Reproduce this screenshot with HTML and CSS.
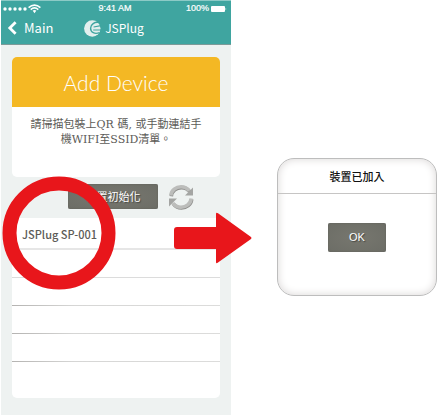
FILE: index.html
```html
<!DOCTYPE html>
<html lang="zh-Hant">
<head>
<meta charset="utf-8">
<meta name="viewport" content="width=device-width, initial-scale=1">
<title>Add Device</title>
<link rel="stylesheet" href="styles.css">
</head>
<body>
<main class="flow">
  <section class="phone">
    <header class="topbar">
      <div class="status">
        <svg class="signal" viewBox="0 0 38 10" width="38" height="10" aria-hidden="true">
          <g fill="#fff"><circle cx="2" cy="5" r="1.7"/><circle cx="7" cy="5" r="1.7"/><circle cx="12" cy="5" r="1.7"/><circle cx="17" cy="5" r="1.7"/><circle cx="22" cy="5" r="1.7"/><path d="M29.6 6.6 L31.5 9.2 L33.4 6.6 Q31.5 5.2 29.6 6.6Z"/></g>
          <g fill="none" stroke="#fff" stroke-width="1.6"><path d="M25.6 3.6 Q31.5 -1.4 37.4 3.6"/><path d="M27.7 5.6 Q31.5 2.2 35.3 5.6"/></g>
        </svg>
        <span class="clock">9:41 AM</span>
        <span class="power">100%
          <svg viewBox="0 0 16 6" width="16" height="6" aria-hidden="true"><rect width="14" height="6" rx="1" fill="#fff"/><path d="M14.6 1.8 Q16 3 14.6 4.2Z" fill="#fff"/></svg>
        </span>
      </div>
      <nav class="nav">
        <a class="back" href="#main">
          <svg viewBox="0 0 10 14" width="10" height="14" aria-hidden="true"><path d="M8.6 1.2 L2.8 7 L8.6 12.8" fill="none" stroke="#fff" stroke-width="2.8"/></svg>
          Main
        </a>
        <span class="brand">
          <svg viewBox="0 0 17 17" width="17" height="17" aria-hidden="true">
            <circle cx="8.3" cy="8.5" r="8.2" fill="#e2efee"/>
            <path d="M15.4 2.6 C10.5 1.4 6.6 4.6 6.6 8.2 C6.6 12.4 10.8 14.6 15.6 12.6" fill="none" stroke="#3fa5a0" stroke-width="1.4"/>
            <path d="M9.6 7 L17 5.6 M9.2 10 H17" fill="none" stroke="#3fa5a0" stroke-width="1.2"/>
          </svg>
          <span class="wordmark">JSPlug</span>
        </span>
      </nav>
    </header>

    <div class="content">
      <article class="card">
        <h1 class="card-title">Add Device</h1>
        <p class="card-text">請掃描包裝上QR 碼, 或手動連結手<br>機WIFI至SSID清單。</p>
      </article>

      <div class="actions">
        <button class="btn init" type="button">裝置初始化</button>
        <button class="refresh" type="button" aria-label="Refresh">
          <svg viewBox="0 0 26 26" width="26" height="26" aria-hidden="true">
            <g transform="translate(.5 .8)" fill="none" stroke="#8f8f8d" stroke-width="3.6"><path d="M2.8 11.5 C3.4 6 8 2.8 13 2.8 C16.4 2.8 19.4 4.4 21.2 7"/><path d="M23.2 14.5 C22.6 20 18 23.2 13 23.2 C9.6 23.2 6.6 21.6 4.8 19"/></g>
            <g fill="none" stroke="#bcbdbb" stroke-width="3.6"><path d="M2.8 11.5 C3.4 6 8 2.8 13 2.8 C16.4 2.8 19.4 4.4 21.2 7"/><path d="M23.2 14.5 C22.6 20 18 23.2 13 23.2 C9.6 23.2 6.6 21.6 4.8 19"/></g>
            <path d="M25 3.5 V11.6 H17Z M1 22.5 V14.4 H9Z" fill="#a4a5a3"/>
          </svg>
        </button>
      </div>

      <ul class="list">
        <li class="row first"><a href="#device">JSPlug SP-001</a>
          <svg class="ring" viewBox="0 0 114 114" width="114" height="114" aria-hidden="true"><circle cx="57" cy="57" r="49.5" fill="none" stroke="#e8161b" stroke-width="14"/></svg>
          <svg class="arrow" viewBox="0 0 78 52" width="78" height="52" aria-hidden="true"><path d="M3 15 H42 V2 Q42 0 44 1.2 L77 25 Q78 26 77 27 L44 50.6 Q42 52 42 50 V37 H3 Q0 37 0 34 V18 Q0 15 3 15Z" fill="#e8161b"/></svg>
        </li>
        <li class="row pale"></li>
        <li class="row"></li>
        <li class="row"></li>
        <li class="row"></li>
        <li class="row last"></li>
      </ul>
    </div>
  </section>

  <section class="result">
    <div class="dialog" role="dialog" aria-labelledby="dialog-title">
      <h2 class="dialog-title" id="dialog-title">裝置已加入</h2>
      <div class="dialog-body"><button class="btn ok" type="button">OK</button></div>
    </div>
  </section>
</main>
</body>
</html>
```
FILE: styles.css
```css
* {
  box-sizing: border-box;
}

body {
  margin: 0;
  background: #fff;
  font-family: "Noto Sans CJK TC", "Noto Sans", sans-serif;
  color: #5c5b57;
}

h1, h2, p, ul {
  margin: 0;
  padding: 0;
  font-weight: 400;
}

a {
  color: inherit;
  text-decoration: none;
}

svg {
  display: block;
}

button {
  border: 0;
  padding: 0;
  cursor: pointer;
}

.flow {
  display: grid;
  grid-template-columns: 230fr 207fr;
  min-height: 100vh;
  padding-left: 1px;
}

.phone {
  background: #eef2f1;
}

.topbar {
  height: 45px;
  background: #3fa5a0;
  border-top: 1px solid #8ccac6;
  border-bottom: 1px solid #7d9a98;
  color: #fff;
}

.status {
  display: grid;
  grid-template-columns: 1fr auto 1fr;
  align-items: center;
  height: 15px;
  padding: 0 4px 0 2px;
  font: 9px/15px "Liberation Sans", sans-serif;
  -webkit-text-stroke: 0.2px #fff;
}

.power {
  display: flex;
  align-items: center;
  justify-content: flex-end;
  gap: 2px;
}

.nav {
  display: grid;
  grid-template-columns: 1fr auto 1fr;
  align-items: center;
  height: 24px;
  padding: 0 10px 0 6px;
}

.back {
  display: flex;
  align-items: center;
  gap: 7px;
  font-size: 13px;
  line-height: 24px;
}

.brand {
  display: flex;
  align-items: center;
  gap: 4px;
}

.wordmark {
  font-size: 12px;
  line-height: 24px;
}

.content {
  padding: 12px 11px 17px;
}

.card {
  min-height: 120px;
  border-radius: 5px;
  background: #fff;
  overflow: hidden;
}

.card-title {
  background: #f4b824;
  color: #fff;
  text-align: center;
  font: 300 21px/52px Lato, sans-serif;
  height: 50px;
}

.card-text {
  padding-top: 10px;
  text-align: center;
  font: 11px/15px "DejaVu Serif", "Noto Sans CJK TC", serif;
}

.actions {
  display: flex;
  align-items: center;
  justify-content: flex-end;
  gap: 10px;
  height: 41px;
  padding: 0 26px 2px 0;
}

.btn {
  border-radius: 2px;
  background: radial-gradient(ellipse, #77776f, #6c6d66);
  box-shadow: inset 0 0 2px #5f605a;
  color: #fff;
  text-shadow: 1px 1px 1px #45453f;
}

.init {
  width: 90px;
  height: 25px;
  font: 11px/25px "Noto Sans CJK TC", sans-serif;
}

.refresh {
  background: none;
}

.list {
  list-style: none;
  border-radius: 5px;
  background: #fff;
}

.row {
  height: 28px;
  border-bottom: 1px solid;
  border-image: linear-gradient(90deg, #b4b3b1, #d6d6d5 30%, #dcdcdb) 1;
}

.first {
  position: relative;
  height: 32px;
  padding-left: 10px;
  border-bottom: 2px solid #e6e6e6;
  border-image: none;
  font-size: 11px;
  font-weight: 500;
  line-height: 32px;
}

.pale {
  border-bottom: 1px solid #dcdcdc;
  border-image: none;
}

.last {
  height: 36px;
  border: 0;
}

.ring {
  position: absolute;
  left: -10px;
  top: -42px;
  pointer-events: none;
}

.arrow {
  position: absolute;
  left: 162px;
  top: -6px;
  pointer-events: none;
}

.result {
  padding: 158px 1px 0 46px;
}

.dialog {
  border: 1px solid #bdbdbd;
  border-radius: 17px;
  box-shadow: inset 0 0 9px #d9d6d5;
}

.dialog-title {
  border-bottom: 1px solid #c6c5c4;
  color: #111;
  text-align: center;
  font: 500 11px/34px "Noto Sans CJK TC", sans-serif;
}

.dialog-body {
  display: flex;
  justify-content: center;
  padding: 29px 0 43px;
}

.ok {
  width: 58px;
  height: 29px;
  font: 11px/29px "Liberation Sans", sans-serif;
}
```
